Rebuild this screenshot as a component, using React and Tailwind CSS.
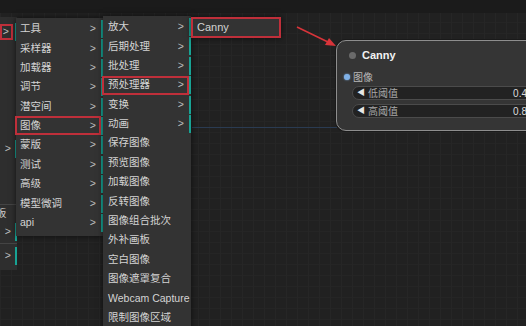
import React from 'react';

const menu1 = ['工具', '采样器', '加载器', '调节', '潜空间', '图像', '蒙版', '测试', '高级', '模型微调', 'api'];

const menu2 = [
  ['放大', true],
  ['后期处理', true],
  ['批处理', true],
  ['预处理器', true],
  ['变换', true],
  ['动画', true],
  ['保存图像'],
  ['预览图像'],
  ['加载图像'],
  ['反转图像'],
  ['图像组合批次'],
  ['外补画板'],
  ['空白图像'],
  ['图像遮罩复合'],
  ['Webcam Capture'],
  ['限制图像区域'],
];

const MenuItem = ({ label, sub, selected, pl = 'pl-[4px]' }) => (
  <div
    className={`relative flex items-center h-[18px] mb-[1.4px] ${pl} pr-[3px] ${
      sub ? 'border-r-2 border-[#18a394]' : ''
    }`}
  >
    <span className="whitespace-nowrap">{label}</span>
    {sub && <span className="ml-auto pr-[2px] text-[#bdbdbd]">&gt;</span>}
    {selected && <div className="absolute -inset-y-[0.5px] -left-[1px] right-0 border-2 border-[#bf2f3a]" />}
  </div>
);

const EdgeRow = ({ red }) => (
  <div className="flex items-center h-[18px] w-[17px] border-r-2 border-[#18a394]">
    <div
      className={`flex items-center justify-end h-[16px] w-[13px] pr-[2px] text-[#bdbdbd] ${
        red ? 'border-2 border-[#bf2f3a]' : ''
      }`}
    >
      &gt;
    </div>
  </div>
);

export default function App() {
  return (
    <div
      className="relative w-[526px] h-[326px] overflow-hidden bg-[#212121] bg-[image:linear-gradient(to_right,#262626_1px,transparent_1px),linear-gradient(to_bottom,#252525_1px,transparent_1px)] bg-[size:11px_11px] text-[10.5px] text-[#d4d4d4] font-['Liberation_Sans','Noto_Sans_CJK_SC',sans-serif]"
    >
      <div className="h-[13px] bg-[#1b1b1b]" />

      {/* link line on the canvas */}
      <div className="absolute left-[192px] top-[127px] w-[145px] h-px bg-[#2a3b52]" />

      {/* parent menu, mostly hidden */}
      <div className="absolute left-0 top-[17px] w-[17px] h-[253px] bg-[#2e2e2e] flex flex-col pt-[6px]">
        <EdgeRow red />
        <div className="h-[99px]" />
        <EdgeRow />
        <div className="h-[46px]" />
        <div className="h-px bg-[#444]" />
        <div className="h-[18px] flex items-center -ml-[4px] text-[#cfcfcf]">板</div>
        <EdgeRow />
        <div className="h-px mt-[2px] bg-[#444]" />
        <div className="mt-[3px]">
          <EdgeRow />
        </div>
      </div>

      {/* menu 1 */}
      <div className="absolute left-[16px] top-[18px] w-[87px] pt-[2px] pb-[3px] bg-[#333] shadow-[0_0_6px_rgba(0,0,0,0.6)]">
        {menu1.map((m) => (
          <MenuItem key={m} label={m} sub selected={m === '图像'} />
        ))}
      </div>

      {/* menu 2 */}
      <div className="absolute left-[103px] top-[16px] w-[88px] pt-[2px] pb-[4px] bg-[#333] shadow-[0_0_6px_rgba(0,0,0,0.6)]">
        {menu2.map(([m, sub]) => (
          <MenuItem key={m} label={m} sub={sub} selected={m === '预处理器'} pl="pl-[5px]" />
        ))}
      </div>

      {/* menu 3 */}
      <div className="absolute left-[191px] top-[17px] w-[90px] h-[21px] bg-[#333] border-2 border-[#bf2f3a] flex items-center pl-[4px] text-[11px] shadow-[0_0_6px_rgba(0,0,0,0.6)]">
        Canny
      </div>

      {/* red arrow */}
      <svg className="absolute left-[290px] top-[20px]" width="50" height="32" viewBox="0 0 50 32">
        <line x1="7" y1="7" x2="40" y2="23" stroke="#d8343a" strokeWidth="1.6" />
        <polygon points="46,26 35,25 39,18" fill="#d8343a" />
      </svg>

      {/* Canny node */}
      <div className="absolute left-[336px] top-[40px] w-[210px] h-[91px] rounded-[10px] border-[1.5px] border-[#8e8e8e] bg-[#353535] shadow-[0_0_0_1px_#1a1a1a] flex flex-col">
        <div className="flex items-center h-[14px] mt-[7px] pl-[12px] gap-[6px]">
          <div className="w-[7px] h-[7px] rounded-full bg-[#6a6a6a]" />
          <span className="font-bold text-[11px] text-[#f2f2f2]">Canny</span>
        </div>
        <div className="flex items-center h-[12px] mt-[9px] pl-[7px] gap-[3px] text-[10px] text-[#b8b8b8]">
          <div className="w-[6px] h-[6px] rounded-full bg-[#7fb0e6] shadow-[0_0_2px_#7fb0e6]" />
          <span>图像</span>
        </div>
        <div className="flex flex-col gap-[4px] mt-[3px] ml-[15px] mr-[8px]">
          {[
            ['低阈值', '0.4'],
            ['高阈值', '0.8'],
          ].map(([n, v]) => (
            <div
              key={n}
              className="flex items-center h-[14px] rounded-full bg-[#222] border border-[#4b4b4b] pl-[4px] pr-[9px] text-[10px]"
            >
              <span className="text-[#e6e6e6] text-[8px] mr-[3px]">◀</span>
              <span className="text-[#a8a8a8]">{n}</span>
              <span className="ml-auto text-[#dcdcdc]">{v}</span>
            </div>
          ))}
        </div>
      </div>
    </div>
  );
}
